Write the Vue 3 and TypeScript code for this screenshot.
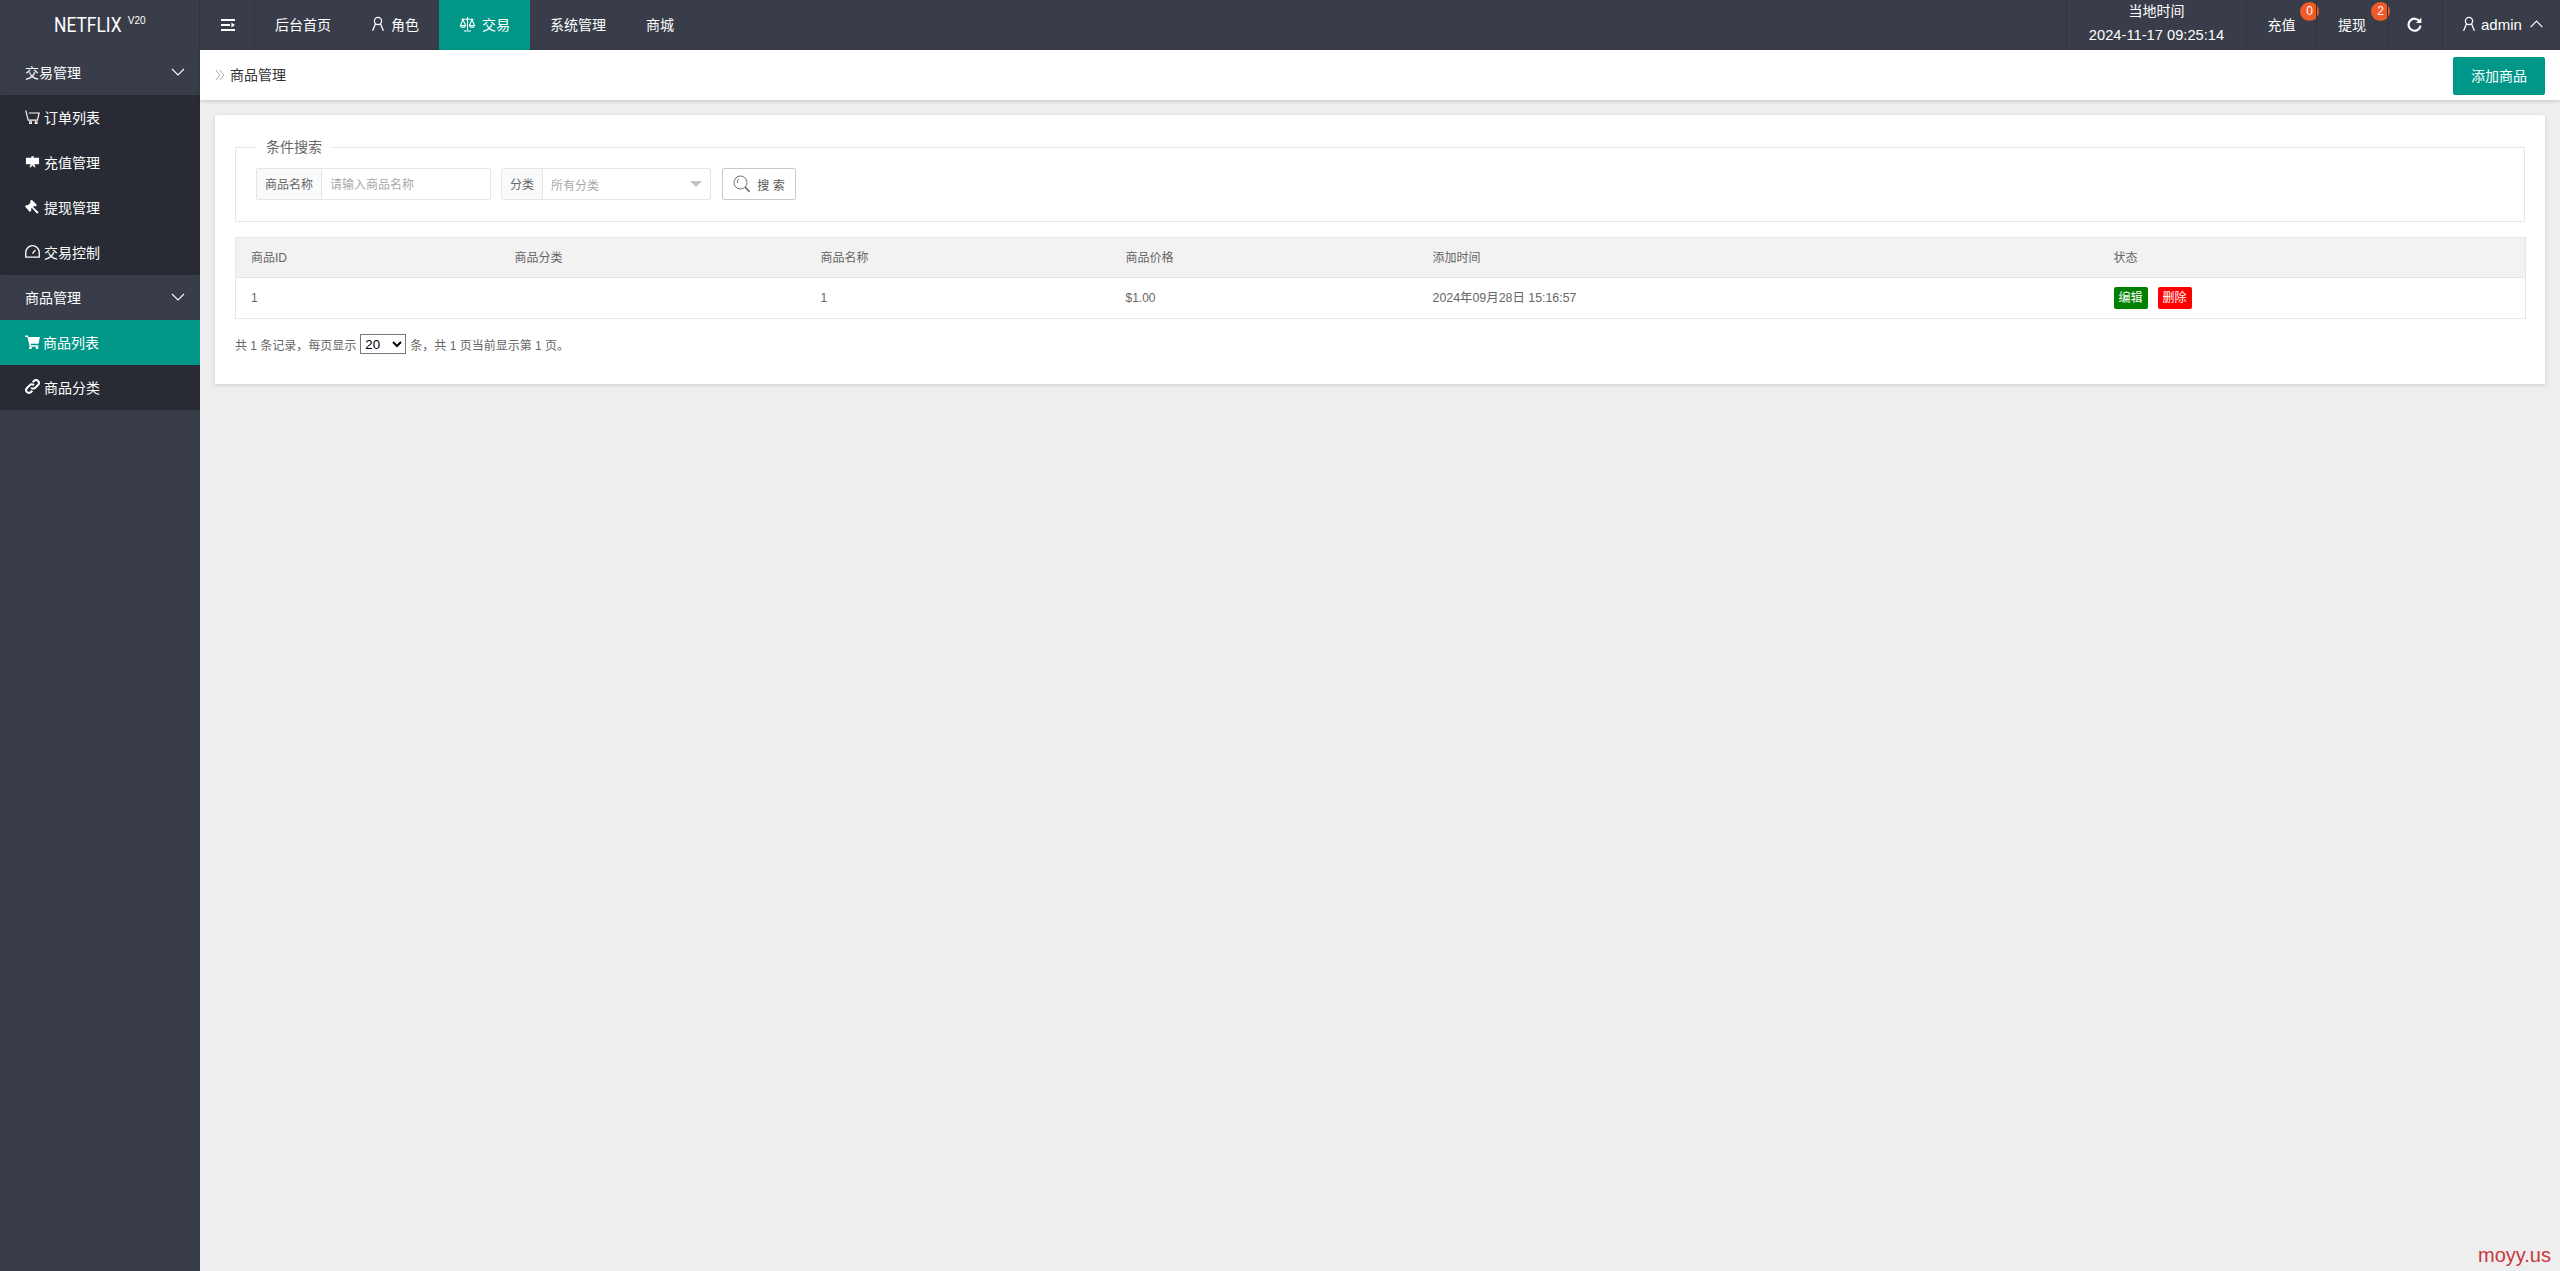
<script setup lang="ts">
interface SideItem {
  label: string;
  icon: string;
  stroke?: number;
  active?: boolean;
}
interface SideGroup {
  title: string;
  items: SideItem[];
}

const cartOutline = "M.8 1.5l2.6 10.3h9.8l1.9-7.6H4M5 13.6h1.8v1.8H5zM11 13.6h1.8v1.8H11z";
const cartSolid = "M0 1.5h3.2l.5 1.7H16l-1.6 7.3H6l.3 1.6h8v1.6H5L2.6 3.1H0zM5.8 13.3a1.5 1.5 0 1 0 .01 0zM12.8 13.3a1.5 1.5 0 1 0 .01 0z";
const screen = "M6.8 2.5h2.4V4H15v7H9.8l1.5 3H9.7L8 12l-1.7 2H4.7l1.5-3H1V4h5.8z";
const gavel = "M7.2.8l5.6 5.6-1.9 1.8-1-.9-1.3 1.3 6 5.4-1.7 1.6-5.5-6-1.3 1.3.9 1-1.9 1.9L0 7.9l1.8-1.8 1 .9 3.4-3.5-.9-1z";
const gauge = "M.8 14V9a7.2 7.2 0 0 1 14.4 0v5zM8 10.2l3-4";
const chain = "M6.6 9.4a3 3 0 0 0 4.3 0l3-3a3 3 0 0 0-4.3-4.3L8.2 3.5M9.4 6.6a3 3 0 0 0-4.3 0l-3 3a3 3 0 0 0 4.3 4.3l1.4-1.4";

const sideGroups: SideGroup[] = [
  {
    title: "交易管理",
    items: [
      { label: "订单列表", icon: cartOutline, stroke: 1.2 },
      { label: "充值管理", icon: screen },
      { label: "提现管理", icon: gavel },
      { label: "交易控制", icon: gauge, stroke: 1.4 },
    ],
  },
  {
    title: "商品管理",
    items: [
      { label: "商品列表", icon: cartSolid, active: true },
      { label: "商品分类", icon: chain, stroke: 2.2 },
    ],
  },
];

const columns = ["商品ID", "商品分类", "商品名称", "商品价格", "添加时间", "状态"];
const colWidths = [264, 306, 305, 307, 681, 427];
</script>

<template>
  <div class="page">
    <header class="topbar">
      <div class="logo">
        <span class="logo-name">NETFLIX</span>
        <sup class="logo-ver">V20</sup>
      </div>
      <a class="shrink">
        <svg width="14" height="14" viewBox="0 0 14 14" fill="#fff">
          <path d="M0 1h14v2H0zM0 6h9v2H0zM0 11h14v2H0zM14 7l-3.6-2.6v5.2z" />
        </svg>
      </a>
      <nav class="topnav">
        <a class="nav-item">后台首页</a>
        <a class="nav-item">
          <svg class="ic" width="14" height="16" viewBox="0 0 14 16" fill="none" stroke="#fff" stroke-width="1.3">
            <circle cx="7" cy="5" r="3.6" />
            <path d="M4.4 8 1.6 14.8M9.6 8l2.8 6.8" />
          </svg>角色
        </a>
        <a class="nav-item on">
          <svg class="ic" width="17" height="16" viewBox="0 0 16 16" fill="none" stroke="#fff" stroke-width="1.1">
            <path d="M2 3.2h12M8 1v13M4.5 15h7M3.5 3.5 1 9.5h5zM12.5 3.5 10 9.5h5zM1 9.8a2.6 2.2 0 0 0 5 0M10 9.8a2.6 2.2 0 0 0 5 0" />
          </svg>交易
        </a>
        <a class="nav-item">系统管理</a>
        <a class="nav-item">商城</a>
      </nav>
      <div class="top-right">
        <div class="clock">
          <div>当地时间</div>
          <div class="clock-time">2024-11-17 09:25:14</div>
        </div>
        <a class="right-item w70">充值<span class="badge">0</span></a>
        <a class="right-item w71">提现<span class="badge">2</span></a>
        <a class="right-item w55">
          <svg class="refresh" width="15" height="15" viewBox="0 0 14 14" fill="none" stroke="#fff" stroke-width="2">
            <path d="M11.8 4.2A5.6 5.6 0 1 0 12.6 8" />
            <path d="M13.4.6v5H8.4z" fill="#fff" stroke="none" />
          </svg>
        </a>
        <a class="user">
          <svg class="ic" width="14" height="16" viewBox="0 0 14 16" fill="none" stroke="#fff" stroke-width="1.3">
            <circle cx="7" cy="5" r="3.6" />
            <path d="M4.4 8 1.6 14.8M9.6 8l2.8 6.8" />
          </svg>
          <span>admin</span>
          <svg class="up" width="13" height="8" viewBox="0 0 13 8" fill="none" stroke="#fff" stroke-width="1.2">
            <path d="M.6 7.2 6.5 1.2l5.9 6" />
          </svg>
        </a>
      </div>
    </header>

    <div class="body">
      <aside class="sidebar">
        <template v-for="group in sideGroups" :key="group.title">
          <div class="side-title">
            <span>{{ group.title }}</span>
            <svg width="14" height="8" viewBox="0 0 14 8" fill="none" stroke="#fff" stroke-width="1.1">
              <path d="M1 1l6 6 6-6" />
            </svg>
          </div>
          <div class="side-list">
            <a v-for="item in group.items" :key="item.label" class="side-item" :class="{ active: item.active }">
              <svg
                width="15"
                height="15"
                viewBox="0 0 16 16"
                :fill="item.stroke ? 'none' : '#fff'"
                :stroke="item.stroke ? '#fff' : 'none'"
                :stroke-width="item.stroke"
              >
                <path :d="item.icon" />
              </svg>
              <span>{{ item.label }}</span>
            </a>
          </div>
        </template>
      </aside>

      <main class="main">
        <div class="crumb">
          <svg class="crumb-arrow" width="10" height="12" viewBox="0 0 10 12" fill="none" stroke="#aaa" stroke-width="1">
            <path d="M.8 1l4 5-4 5M4.8 1l4 5-4 5" />
          </svg>
          <span class="crumb-text">商品管理</span>
          <button class="add-btn">添加商品</button>
        </div>

        <section class="card">
          <fieldset class="search-box">
            <legend>条件搜索</legend>
            <div class="search-row">
              <div class="group g-name">
                <label class="group-label">商品名称</label>
                <input class="group-input" placeholder="请输入商品名称" />
              </div>
              <div class="group g-cat">
                <label class="group-label">分类</label>
                <div class="group-select">
                  <span>所有分类</span>
                  <i class="caret"></i>
                </div>
              </div>
              <button class="search-btn">
                <svg width="18" height="18" viewBox="0 0 18 18" fill="none" stroke="#777" stroke-width="1">
                  <circle cx="7.5" cy="7.5" r="6.5" />
                  <path d="M4.5 8a3.5 3.5 0 0 1 1.4-4" />
                  <path d="M12.2 12.2l4.4 4.6" stroke-width="1.8" />
                </svg>
                <span>搜 索</span>
              </button>
            </div>
          </fieldset>

          <table class="grid">
            <colgroup>
              <col v-for="(w, i) in colWidths" :key="i" :width="w" />
            </colgroup>
            <thead>
              <tr>
                <th v-for="c in columns" :key="c">{{ c }}</th>
              </tr>
            </thead>
            <tbody>
              <tr>
                <td>1</td>
                <td></td>
                <td>1</td>
                <td>$1.00</td>
                <td class="date">2024年09月28日 15:16:57</td>
                <td class="ops">
                  <a class="op green">编辑</a>
                  <a class="op red">删除</a>
                </td>
              </tr>
            </tbody>
          </table>

          <div class="pager">
            <span>共 1 条记录，每页显示</span>
            <select class="size">
              <option>20</option>
            </select>
            <span>条，共 1 页当前显示第 1 页。</span>
          </div>
        </section>
      </main>
    </div>

    <div class="mark">moyy.us</div>
  </div>
</template>

<style>
html,
body {
  margin: 0;
  background: #eee;
}
</style>

<style scoped>
.page {
  position: relative;
  height: 1271px;
  overflow: hidden;
  display: flex;
  flex-direction: column;
  background: #eee;
  color: #666;
  font-family: "Liberation Sans", "Noto Sans CJK SC", sans-serif;
  font-size: 14px;
}

.topbar {
  display: flex;
  height: 50px;
  flex: none;
  background: #393d49;
  color: #fff;
}
.logo {
  width: 200px;
  box-sizing: border-box;
  border-right: 1px solid #32353f;
  padding-left: 54px;
  display: flex;
  align-items: center;
}
.logo-name {
  display: inline-block;
  font-family: "Roboto", sans-serif;
  font-weight: 400;
  font-size: 20px;
  transform: scaleX(0.87);
  transform-origin: left center;
  margin-right: -10px;
}
.logo-ver {
  font-size: 10px;
  margin: 0 0 10px 6px;
}
.shrink {
  width: 55px;
  box-sizing: border-box;
  border-right: 1px solid #32353f;
  padding-left: 2px;
  display: flex;
  align-items: center;
  justify-content: center;
}
.topnav {
  display: flex;
}
.nav-item {
  display: flex;
  align-items: center;
  padding: 0 20px 2px;
}
.nav-item.on {
  background: #009688;
}
.ic {
  margin-right: 6px;
}
.top-right {
  margin-left: auto;
  display: flex;
}
.clock {
  width: 180px;
  box-sizing: border-box;
  border-left: 1px solid #32353f;
  text-align: center;
  line-height: 23px;
}
.clock-time {
  font-size: 14.7px;
  margin-top: 1px;
}
.right-item {
  position: relative;
  box-sizing: border-box;
  border-left: 1px solid #32353f;
  padding-bottom: 2px;
  display: flex;
  align-items: center;
  justify-content: center;
}
.w70 {
  width: 70px;
}
.w71 {
  width: 71px;
}
.w55 {
  width: 55px;
}
.refresh {
  margin-right: 2px;
}
.badge {
  position: absolute;
  top: 2px;
  right: -3px;
  width: 19px;
  height: 19px;
  border-radius: 50%;
  background: #f05a28;
  font-size: 12px;
  line-height: 19px;
  text-align: center;
}
.user {
  width: 118px;
  box-sizing: border-box;
  border-left: 1px solid #32353f;
  padding: 0 0 2px 19px;
  display: flex;
  align-items: center;
}
.user .ic {
  margin-right: 5px;
}
.user span {
  font-size: 15px;
}
.up {
  margin-left: 8px;
}

.body {
  flex: 1;
  display: flex;
  min-height: 0;
}
.sidebar {
  width: 200px;
  flex: none;
  background: #393d49;
  color: #fff;
}
.side-title {
  height: 45px;
  box-sizing: border-box;
  padding: 0 15px 2px 25px;
  display: flex;
  align-items: center;
  justify-content: space-between;
}
.side-list {
  background: #282b33;
  border-radius: 2px;
}
.side-item {
  height: 45px;
  box-sizing: border-box;
  padding: 0 0 2px 25px;
  display: flex;
  align-items: center;
  gap: 4px;
}
.side-item.active {
  background: #009688;
}
.side-item.active span {
  margin-left: -1px;
}

.main {
  flex: 1;
  min-width: 0;
}
.crumb {
  height: 50px;
  box-sizing: border-box;
  background: #fff;
  box-shadow: 0 1px 4px rgba(0, 0, 0, 0.18);
  display: flex;
  align-items: center;
  padding: 0 15px;
  color: #333;
}
.crumb-arrow {
  margin-right: 5px;
}
.crumb-text {
  margin-bottom: 2px;
}
.add-btn {
  margin: 2px 0 0 auto;
  width: 92px;
  height: 38px;
  border: 0;
  border-radius: 2px;
  background: #009688;
  color: #fff;
  font: inherit;
  padding: 0 0 2px;
}

.card {
  margin: 15px 15px 0;
  height: 269px;
  box-sizing: border-box;
  background: #fff;
  box-shadow: 0 1px 4px rgba(0, 0, 0, 0.15);
  padding: 25px 20px 0;
}
.search-box {
  margin: 0;
  padding: 14px 20px 0;
  height: 82px;
  box-sizing: border-box;
  border: 1px solid #e6e6e6;
}
.search-box legend {
  margin-left: 0;
  padding: 0 10px;
  font-size: 14px;
  line-height: 14px;
}
.search-row {
  display: flex;
  gap: 10px;
  font-size: 12px;
}
.group {
  display: flex;
  height: 32px;
  box-sizing: border-box;
  border: 1px solid #e6e6e6;
  border-radius: 2px;
}
.g-name {
  width: 235px;
}
.g-cat {
  width: 210px;
}
.group-label {
  padding: 0 8px;
  background: #fafafa;
  border-right: 1px solid #e6e6e6;
  color: #666;
  line-height: 32px;
}
.group-input {
  flex: 1;
  min-width: 0;
  border: 0;
  outline: 0;
  padding: 2px 8px 0;
  font: inherit;
}
.group-input::placeholder {
  color: #aaa;
}
.group-select {
  flex: 1;
  padding: 0 8px;
  display: flex;
  align-items: center;
  justify-content: space-between;
  color: #aaa;
}
.caret {
  border: 6px solid transparent;
  border-top: 6px solid #c2c2c2;
  border-bottom: 0;
}
.search-btn {
  width: 74px;
  height: 32px;
  margin-left: 1px;
  border: 1px solid #c9c9c9;
  border-radius: 2px;
  background: #fff;
  color: #555;
  font: inherit;
  display: flex;
  align-items: center;
  justify-content: center;
  gap: 6px;
  padding: 0;
}

.grid {
  margin-top: 15px;
  width: 100%;
  table-layout: fixed;
  border-collapse: collapse;
  font-size: 12px;
}
.grid th {
  height: 37px;
  padding: 0 15px 2px;
  background: #f2f2f2;
  border: 1px solid #e6e6e6;
  border-width: 1px 0;
  text-align: left;
  font-weight: 400;
}
.grid td {
  height: 40px;
  padding: 0 15px;
  border-bottom: 1px solid #e6e6e6;
}
.grid td.date {
  height: 38px;
  font-size: 12.4px;
  padding-bottom: 2px;
}
.grid th:first-child,
.grid td:first-child {
  border-left: 1px solid #e6e6e6;
}
.grid th:last-child,
.grid td:last-child {
  border-right: 1px solid #e6e6e6;
}
.ops {
  font-size: 0;
}
.op {
  display: inline-block;
  width: 34px;
  height: 22px;
  margin-right: 10px;
  border-radius: 2px;
  color: #fff;
  font-size: 12px;
  line-height: 22px;
  text-align: center;
}
.green {
  background: #008000;
}
.red {
  background: #f00;
}

.pager {
  margin-top: 15px;
  display: flex;
  align-items: center;
  gap: 4px;
  font-size: 12px;
}
.size {
  width: 46px;
  height: 20px;
  font-family: "Liberation Sans", sans-serif;
  font-size: 13.3px;
  background: #fff;
  color: #000;
}

.mark {
  position: absolute;
  right: 9px;
  bottom: 4px;
  font-size: 20px;
  color: #c8383c;
}
</style>
